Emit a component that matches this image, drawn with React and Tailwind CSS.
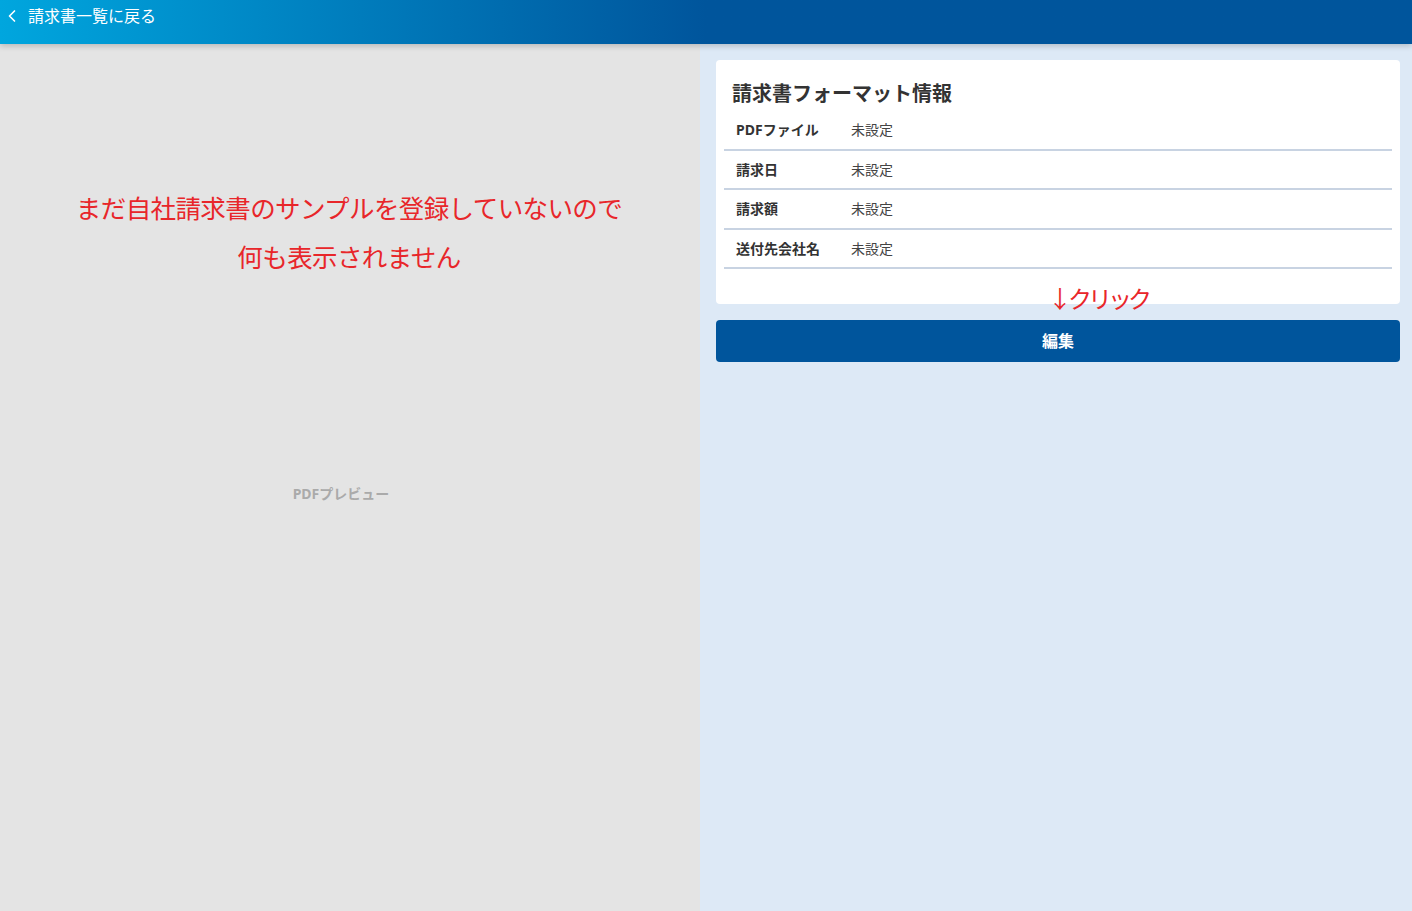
import { ChevronLeft } from "lucide-react";

const rows = [
  { label: "PDFファイル", value: "未設定" },
  { label: "請求日", value: "未設定" },
  { label: "請求額", value: "未設定" },
  { label: "送付先会社名", value: "未設定" },
];

export default function App() {
  return (
    <div
      className="flex flex-col w-full h-[911px] overflow-hidden text-[#333]"
      style={{ fontFamily: '"Noto Sans", "Noto Sans CJK JP", sans-serif' }}
    >
      <header className="relative z-10 h-[44px] shrink-0 flex items-start bg-gradient-to-r from-[#00a6de] via-[#00559c] via-50% to-[#00559c] shadow-[0_2px_6px_rgba(0,0,0,0.2)]">
        <button type="button" className="flex items-center gap-1.5 pl-[2px] pt-[4px] text-white text-[16px]">
          <ChevronLeft size={20} strokeWidth={2} />
          <span>請求書一覧に戻る</span>
        </button>
      </header>

      <div className="flex flex-1 min-h-0">
        {/* PDF preview */}
        <section className="relative w-[700px] shrink-0 bg-[#e4e4e4] flex items-center justify-center pr-[18px]">
          <span className="text-[14px] font-bold text-[#aaaaaa] mt-[32px]">PDFプレビュー</span>
          <p className="absolute left-0 w-[700px] top-[140px] text-center text-[#e8262a] text-[25.5px] leading-[49px] tracking-[-0.6px] pr-[2px]">
            まだ自社請求書のサンプルを登録していないので
            <br />
            何も表示されません
          </p>
        </section>

        {/* format info */}
        <section className="relative flex-1 bg-[#dde9f6] pl-4 pr-3 pt-4">
          <div className="bg-white rounded-[4px] px-2 pt-[20px] pb-[35px]">
            <h2 className="px-2 text-[20px] font-bold leading-[28px] text-[#333]">請求書フォーマット情報</h2>
            <div className="mt-[3px]">
              {rows.map((r) => (
                <div
                  key={r.label}
                  className="flex items-center h-[39.5px] border-b-2 border-[#c8d3e2] text-[14px]"
                >
                  <span className="w-[127px] pl-3 font-bold text-[#333]">{r.label}</span>
                  <span className="text-[#444]">{r.value}</span>
                </div>
              ))}
            </div>
          </div>
          <span className="absolute left-[348px] top-[243px] text-[#e8262a] text-[24px] leading-none tracking-[-4px]">
            ↓クリック
          </span>
          <button
            type="button"
            className="mt-4 w-full h-[42px] rounded-[4px] bg-[#00559c] text-white text-[16px] font-bold"
          >
            編集
          </button>
        </section>
      </div>
    </div>
  );
}
